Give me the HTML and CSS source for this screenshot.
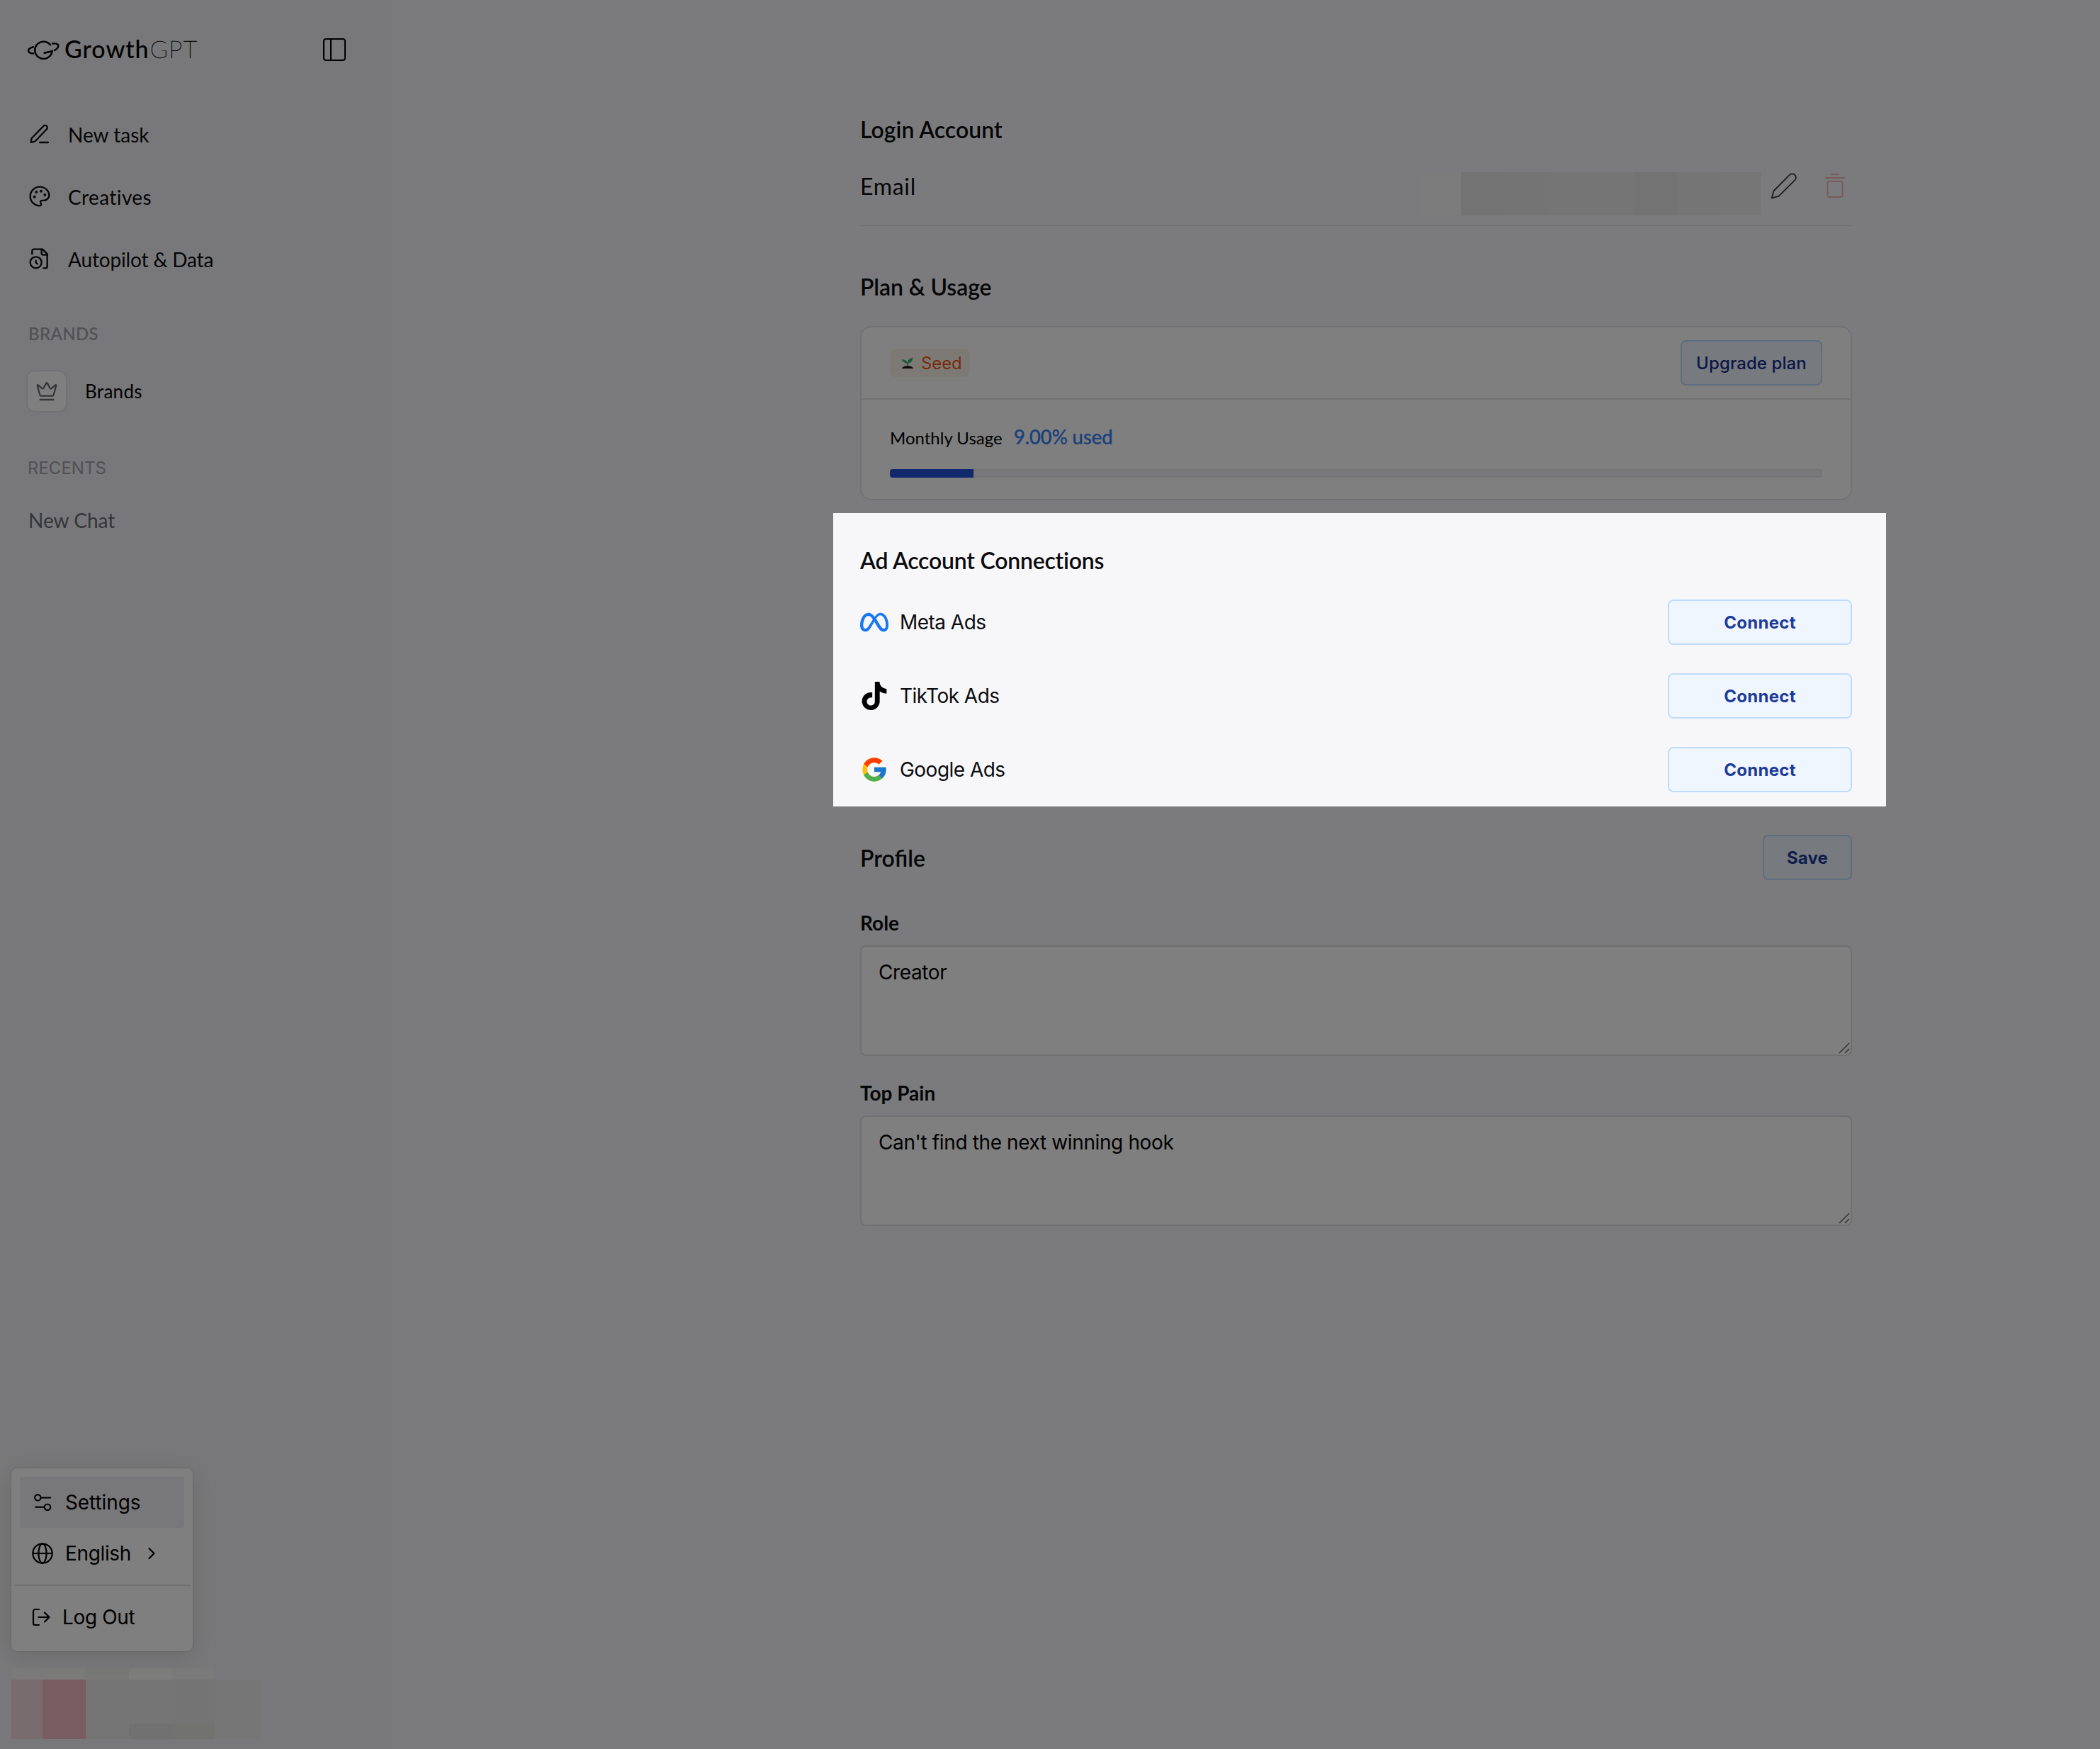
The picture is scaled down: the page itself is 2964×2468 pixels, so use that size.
FILE: index.html
```html
<!DOCTYPE html>
<html lang="en">
<head>
<meta charset="utf-8">
<title>GrowthGPT – Settings</title>
<link rel="stylesheet" href="styles.css">
</head>
<body>
<div class="app">
  <aside class="sidebar">
    <header class="brand-bar">
      <svg class="planet" viewBox="0 0 46 28" fill="none" stroke="currentColor" stroke-width="2.5" stroke-linecap="round">
        <path d="M33 7.2A12.2 12.2 0 1 0 35.6 16.2L24.6 18.8"/>
        <path d="M9 10.2C4 11.600 1.600 13.600 2.200 16c.5 2.300 3.200 3.400 7 3.500"/>
        <path d="M36.200 5.600c4.500-.6 7.600.2 8 2.400.4 2.300-2 5-5.200 7"/>
      </svg>
      <span class="logo-word">Growth</span><span class="logo-thin">GPT</span>
      <svg class="toggle" viewBox="0 0 34 34" fill="none" stroke="currentColor" stroke-width="2"><rect x="2" y="2" width="30" height="30" rx="3"/><path d="M12 2v30"/></svg>
    </header>
    <nav class="nav">
      <a class="nav-item"><svg class="ico" viewBox="0 0 32 32" fill="none" stroke="currentColor" stroke-width="2.300" stroke-linecap="round" stroke-linejoin="round"><path d="M3.700 27.800l.8-5.600L21.400 4.900a3.100 3.100 0 0 1 4.600 4.300L9.200 26.700z"/><path d="M16 28h12"/></svg><span>New task</span></a>
      <a class="nav-item"><svg class="ico" viewBox="0 0 24 24" fill="none" stroke="currentColor" stroke-width="1.800" stroke-linecap="round" stroke-linejoin="round"><circle cx="13.500" cy="6.500" r=".6" fill="currentColor"/><circle cx="17.500" cy="10.500" r=".6" fill="currentColor"/><circle cx="8.500" cy="7.500" r=".6" fill="currentColor"/><circle cx="6.500" cy="12.500" r=".6" fill="currentColor"/><path d="M12 2C6.500 2 2 6.500 2 12s4.500 10 10 10c.926 0 1.648-.746 1.648-1.688 0-.437-.18-.835-.437-1.125-.29-.289-.438-.652-.438-1.125a1.640 1.640 0 0 1 1.668-1.668h1.996c3.051 0 5.555-2.503 5.555-5.554C21.965 6.012 17.461 2 12 2z"/></svg><span class="ls-wide">Creatives</span></a>
      <a class="nav-item"><svg class="ico" viewBox="0 0 24 24" fill="none" stroke="currentColor" stroke-width="1.800" stroke-linecap="round" stroke-linejoin="round"><path d="M16 22h2a2 2 0 0 0 2-2V7l-5-5H6a2 2 0 0 0-2 2v3"/><path d="M14 2v4a2 2 0 0 0 2 2h4"/><circle cx="8" cy="16" r="6"/><path d="M9.500 17.500 8 16.250V14"/></svg><span class="ls-tight">Autopilot &amp; Data</span></a>
    </nav>
    <h3 class="group">BRANDS</h3>
    <a class="brand-row"><span class="tile"><svg class="ico" viewBox="0 0 24 24" fill="none" stroke="currentColor" stroke-width="1.700" stroke-linecap="round" stroke-linejoin="round"><path d="M11.562 3.266a.5.5 0 0 1 .876 0L15.390 8.870a1 1 0 0 0 1.516.294L21.183 5.500a.5.5 0 0 1 .798.519l-2.834 10.246a1 1 0 0 1-.956.734H5.810a1 1 0 0 1-.957-.734L2.020 6.020a.5.5 0 0 1 .798-.519l4.276 3.664a1 1 0 0 0 1.516-.294z"/><path d="M5 21h14"/></svg></span><span>Brands</span></a>
    <h3 class="group group-recents">RECENTS</h3>
    <a class="chat">New Chat</a>

    <div class="user">
      <div class="user-top"><i></i><i></i><i></i><i></i><i></i></div>
      <div class="user-main"><i></i><i></i><i></i><i></i><i></i><i></i></div>
    </div>
  </aside>

  <div class="menu">
    <a class="menu-item active"><svg class="ico" viewBox="0 0 32 32" fill="none" stroke="currentColor" stroke-width="2.200" stroke-linecap="round"><circle cx="9.300" cy="9.300" r="4.200"/><path d="M13.700 9.300h13.500M6.200 22.700h12.200"/><circle cx="23" cy="22.700" r="4.200"/></svg><span>Settings</span></a>
    <a class="menu-item"><svg class="ico" viewBox="0 0 32 32" fill="none" stroke="currentColor" stroke-width="2.200"><circle cx="16" cy="16" r="13.700"/><ellipse cx="16" cy="16" rx="5.600" ry="13.700"/><path d="M2.300 16h27.400"/></svg><span class="english">English</span><svg class="chev" viewBox="0 0 14 20" fill="none" stroke="currentColor" stroke-width="2.200" stroke-linecap="round" stroke-linejoin="round"><path d="M2.500 3l7 7-7 7"/></svg></a>
    <hr>
    <a class="menu-item logout"><svg class="out" viewBox="0 0 28 28" fill="none" stroke="currentColor" stroke-width="2.200" stroke-linecap="round" stroke-linejoin="round"><path d="M11 3H5.500a2.500 2.500 0 0 0-2.500 2.500v17A2.500 2.500 0 0 0 5.500 25H11M10.500 14h15M19 7.500l6.500 6.500-6.500 6.500"/></svg><span>Log Out</span></a>
  </div>

  <main class="main">
    <h2>Login Account</h2>
    <div class="email-row">
      <span class="email-label">Email</span>
      <div class="email-mask"><i></i><i></i><i></i><i></i><i></i><i></i><i></i><i></i></div>
      <svg class="pencil" viewBox="0 0 40 40" fill="none" stroke="currentColor" stroke-width="1.900" stroke-linejoin="round"><path d="M2.800 37.500l2.600-10L27.800 4.800a5.200 5.200 0 0 1 7.500 7.400L12.500 34.800z"/></svg>
      <svg class="trash" viewBox="0 0 32 40" fill="none" stroke="currentColor" stroke-width="2"><path d="M10 4h12M2 9h28"/><rect x="5.500" y="14" width="21" height="22" rx="2"/></svg>
    </div>

    <h2 class="h-plan">Plan &amp; Usage</h2>
    <section class="card">
      <div class="card-top">
        <span class="badge"><svg viewBox="0 0 18 18"><path d="M9 9.500v5" stroke="#2fb574" stroke-width="1.600"/><path d="M9 10C7.500 10 2 8 .6 4.200 4.400 4 8.500 6 9 10zM9 10c-.8-4 2.500-7.500 7.400-8.500C16.600 5.500 13.500 9.500 9 10z" fill="#2fb574"/><path d="M.8 17c1.400-3 4.600-3.600 8.200-3.600s6.800.6 8.200 3.600z" fill="#151515"/></svg>Seed</span>
        <button class="btn btn-upgrade">Upgrade plan</button>
      </div>
      <div class="card-body">
        <div class="usage"><span>Monthly Usage</span><strong>9.00% used</strong></div>
        <div class="bar"><div class="fill" style="width:9%"></div></div>
      </div>
    </section>

    <section class="spotlight">
      <h2>Ad Account Connections</h2>
      <div class="conn"><svg class="logo" viewBox="0 0 24 24" fill="#1877f2"><path d="M6.915 4.030c-1.968 0-3.683 1.280-4.871 3.113C.704 9.208 0 11.883 0 14.449c0 .706.07 1.369.21 1.973a6.624 6.624 0 0 0 .265.86 5.297 5.297 0 0 0 .371.761c.696 1.159 1.818 1.927 3.593 1.927 1.497 0 2.633-.671 3.965-2.444.76-1.012 1.144-1.626 2.663-4.320l.756-1.339.186-.325c.061.1.121.196.183.3l2.152 3.595c.724 1.210 1.665 2.556 2.470 3.314 1.046.987 1.992 1.220 3.060 1.220 1.075 0 1.876-.355 2.455-.843a3.743 3.743 0 0 0 .81-.973c.542-.939.861-2.127.861-3.745 0-2.720-.681-5.357-2.084-7.450-1.282-1.912-2.957-2.930-4.716-2.930-1.047 0-2.088.467-3.053 1.308-.652.57-1.257 1.290-1.820 2.050-.69-.875-1.335-1.547-1.958-2.056-1.182-.966-2.315-1.303-3.454-1.303zm10.160 2.053c1.147 0 2.188.758 2.992 1.999 1.132 1.748 1.647 4.195 1.647 6.400 0 1.548-.368 2.900-1.839 2.900-.58 0-1.027-.23-1.664-1.004-.496-.601-1.343-1.878-2.832-4.358l-.617-1.028a44.908 44.908 0 0 0-1.255-1.980c.07-.109.141-.224.211-.327 1.120-1.667 2.118-2.602 3.358-2.602zm-10.201.553c1.265 0 2.058.791 2.675 1.446.307.327.737.871 1.234 1.579l-1.020 1.566c-.757 1.163-1.882 3.017-2.837 4.338-1.191 1.649-1.810 1.817-2.486 1.817-.524 0-1.038-.237-1.383-.794-.263-.426-.464-1.130-.464-2.046 0-2.221.63-4.535 1.660-6.088.454-.687.964-1.226 1.533-1.533a2.264 2.264 0 0 1 1.088-.285z"/></svg><span>Meta Ads</span><button class="btn btn-connect">Connect</button></div>
      <div class="conn"><svg class="logo" viewBox="0 0 24 24" fill="#000"><path d="M12.525.02c1.310-.02 2.610-.01 3.910-.02.08 1.530.63 3.090 1.750 4.170 1.120 1.110 2.700 1.620 4.240 1.790v4.030c-1.440-.05-2.890-.35-4.200-.97-.57-.26-1.100-.59-1.620-.93-.01 2.920.01 5.840-.02 8.750-.08 1.400-.54 2.790-1.350 3.940-1.310 1.920-3.580 3.170-5.910 3.210-1.430.08-2.860-.31-4.080-1.030-2.020-1.190-3.440-3.370-3.650-5.710-.02-.5-.03-1-.01-1.490.18-1.900 1.120-3.720 2.580-4.960 1.660-1.440 3.980-2.130 6.150-1.720.02 1.480-.04 2.960-.04 4.440-.99-.32-2.150-.23-3.020.37-.63.41-1.110 1.040-1.360 1.750-.21.51-.15 1.070-.14 1.610.24 1.640 1.820 3.020 3.500 2.870 1.120-.01 2.190-.66 2.770-1.610.19-.33.4-.67.41-1.060.1-1.790.06-3.570.07-5.360.01-4.030-.01-8.050.02-12.070z"/></svg><span>TikTok Ads</span><button class="btn btn-connect">Connect</button></div>
      <div class="conn"><svg class="logo" viewBox="0 0 48 48"><path fill="#FFC107" d="M43.611 20.083H42V20H24v8h11.303c-1.649 4.657-6.080 8-11.303 8-6.627 0-12-5.373-12-12s5.373-12 12-12c3.059 0 5.842 1.154 7.961 3.039l5.657-5.657C34.046 6.053 29.268 4 24 4 12.955 4 4 12.955 4 24s8.955 20 20 20 20-8.955 20-20c0-1.341-.138-2.650-.389-3.917z"/><path fill="#FF3D00" d="M6.306 14.691l6.571 4.819C14.655 15.108 18.961 12 24 12c3.059 0 5.842 1.154 7.961 3.039l5.657-5.657C34.046 6.053 29.268 4 24 4 16.318 4 9.656 8.337 6.306 14.691z"/><path fill="#4CAF50" d="M24 44c5.166 0 9.860-1.977 13.409-5.192l-6.190-5.238C29.211 35.091 26.715 36 24 36c-5.202 0-9.619-3.317-11.283-7.946l-6.522 5.025C9.505 39.556 16.227 44 24 44z"/><path fill="#1976D2" d="M43.611 20.083H42V20H24v8h11.303c-.792 2.237-2.231 4.166-4.087 5.571l6.193 5.238C36.971 39.205 44 34 44 24c0-1.341-.138-2.650-.389-3.917z"/></svg><span>Google Ads</span><button class="btn btn-connect">Connect</button></div>
    </section>

    <div class="profile-head"><h2>Profile</h2><button class="btn btn-save">Save</button></div>
    <label>Role</label>
    <div class="field"><textarea>Creator</textarea><svg class="grip" viewBox="0 0 16 16" stroke="currentColor" stroke-width="1.500" fill="none"><path d="M1 15L15 1M9 15l6-6"/></svg></div>
    <label>Top Pain</label>
    <div class="field"><textarea>Can't find the next winning hook</textarea><svg class="grip" viewBox="0 0 16 16" stroke="currentColor" stroke-width="1.500" fill="none"><path d="M1 15L15 1M9 15l6-6"/></svg></div>
  </main>
</div>
</body>
</html>
```
FILE: styles.css
```css
* { box-sizing: border-box; }
body {
  margin: 0;
  overflow: hidden;
  background: #f7f7fa;
  color: #0b0c0e;
  font-family: Lato, sans-serif;
  font-size: 28px;
}
svg { display: block; flex: none; }
h2, h3 { margin: 0; }
.app { display: flex; height: 2468px; }

/* Sidebar */
.sidebar {
  width: 552px;
  padding-top: 40px;
  background: #f1f1f4;
  display: flex;
  flex-direction: column;
}
.brand-bar { display: flex; align-items: center; height: 60px; padding: 0 63px 0 38px; color: #000; font-size: 34px; }
.planet { width: 46px; height: 28px; margin-right: 7px; }
.logo-word, .logo-thin { padding-bottom: 3px; }
.logo-word { font-weight: 500; letter-spacing: 1px; }
.logo-thin { margin-left: 1px; font-weight: 100; letter-spacing: 1.5px; -webkit-text-stroke: .5px #000; }
.toggle { width: 34px; height: 34px; margin-left: auto; }
.nav { margin-top: 45px; }
.nav-item { display: flex; align-items: center; height: 88px; padding-left: 40px; gap: 24px; }
.nav-item span { padding-top: 2px; }
.ico { width: 32px; height: 32px; }
.ls-wide { letter-spacing: .4px; }
.ls-tight { letter-spacing: -.15px; }
.group { margin: 42px 0 0 40px; line-height: 40px; font-size: 24px; font-weight: 600; letter-spacing: .3px; color: #a5a5ab; }
.brand-row { display: flex; align-items: center; gap: 25px; height: 60px; margin: 31px 0 0 37px; font-size: 26px; letter-spacing: .3px; color: #000; }
.tile { display: flex; align-items: center; justify-content: center; width: 58px; height: 60px; border: 2px solid #e4e4e8; border-radius: 12px; background: #fff; color: #6b6b74; }
.group-recents { margin-top: 59px; margin-left: 39px; font-family: Inter, sans-serif; font-weight: 400; letter-spacing: 0; color: #a1a1a9; }
.chat { margin: 33px 0 0 40px; line-height: 40px; color: #6a6a71; }
.user { margin: auto 0 14px 16px; width: 354px; }
.user-top, .user-main { display: flex; height: 16px; }
.user-main { height: 84px; }
.user i { height: 100%; flex: none; }
.user-top i:nth-child(1) { width: 44px; background: #f5f5f5; }
.user-top i:nth-child(2) { width: 61px; background: #f7f7f5; }
.user-top i:nth-child(3) { width: 61px; background: #f1f1f0; }
.user-top i:nth-child(4) { width: 61px; background: #fbfbfa; }
.user-top i:nth-child(5) { width: 60px; background: #f5f5f6; }
.user-main i:nth-child(1) { width: 44px; background: #f2d8dc; }
.user-main i:nth-child(2) { width: 61px; background: #f3bac5; }
.user-main i:nth-child(3) { width: 61px; background: #eaebec; }
.user-main i:nth-child(4) { width: 61px; background: linear-gradient(#ebebed 74%, #e3e3e5 74%); }
.user-main i:nth-child(5) { width: 60px; background: linear-gradient(#e9e9eb 74%, #e4e4e2 74%); }
.user-main i:nth-child(6) { width: 66px; background: #ededef; }

/* Account menu */
.menu {
  position: absolute;
  left: 16px;
  top: 2072px;
  z-index: 1;
  width: 256px;
  height: 258px;
  padding: 12px 0;
  border-radius: 8px;
  background: #fff;
  box-shadow: 0 0 2px rgba(0, 0, 0, .25), 0 6px 36px rgba(0, 0, 0, .12);
  font-family: Inter, sans-serif;
  color: #000;
}
.menu-item { display: flex; align-items: center; height: 72px; margin: 0 12px; padding-left: 16px; gap: 16px; letter-spacing: -.1px; border-radius: 4px; }
.menu-item.active { background: #f1f1f4; }
.english { letter-spacing: -.35px; }
.chev { width: 14px; height: 20px; margin-left: 7px; }
.menu hr { margin: 8px 4px; border: 0; height: 2px; background: #dededf; }
.out { width: 28px; height: 28px; }
.logout { gap: 16px; letter-spacing: -.35px; }

/* Settings page */
.main { width: 2062px; padding: 163px 0 0 662px; }
h2 { font-size: 32px; font-weight: 600; line-height: 40px; }
.email-row { display: flex; align-items: center; height: 112px; margin-top: 4px; border-bottom: 2px solid #e1e1e4; }
.email-label { font-size: 32px; letter-spacing: .7px; }
.email-mask { display: flex; height: 61px; margin: 22px 12px 0 auto; }
.email-mask i { width: 61px; background: #eaeaeb; }
.email-mask i:nth-child(1) { width: 58px; background: #f8f8fa; }
.email-mask i:nth-child(2) { background: #e6e6e7; }
.email-mask i:nth-child(3) { background: #e8e8e9; }
.email-mask i:nth-child(6) { background: #e6e6e8; }
.email-mask i:nth-child(8) { width: 58px; background: #ececed; }
.pencil { width: 40px; height: 40px; color: #3f3f46; }
.trash { width: 32px; height: 40px; margin: 0 8px 0 36px; color: #f5b4b6; }
.h-plan { margin-top: 66px; letter-spacing: -.1px; }
.card { width: 1400px; height: 246px; margin-top: 35px; border: 2px solid #e4e4e6; border-radius: 16px; background: #fff; }
.card-top { display: flex; align-items: center; justify-content: space-between; height: 102px; padding: 0 40px; border-bottom: 2px solid #e4e4e6; }
.badge { display: flex; align-items: center; gap: 10px; height: 40px; width: 113px; padding-left: 16px; border-radius: 8px; background: #fbf4ea; color: #f2561a; font: 400 24px Inter, sans-serif; letter-spacing: -.1px; }
.badge svg { width: 18px; height: 18px; }
.btn { height: 64px; padding: 1px 0 0; border: 2px solid #bfdbfe; border-radius: 8px; background: #eff6ff; color: #1e3a99; font: 700 24px Inter, sans-serif; letter-spacing: .3px; text-align: center; }
.btn-upgrade { width: 200px; font-weight: 500; letter-spacing: .1px; color: #1a2f8f; }
.btn-connect { width: 260px; margin-left: auto; }
.btn-save { width: 126px; letter-spacing: .1px; }
.card-body { padding: 32px 40px 0; color: #000; }
.usage { display: flex; align-items: baseline; gap: 16px; height: 40px; line-height: 40px; font-size: 24px; }
.usage strong { font-size: 28px; font-weight: 600; letter-spacing: -.4px; color: #3b82f6; }
.bar { height: 12px; margin-top: 26px; border-radius: 4px; overflow: hidden; background: #f1f1f4; box-shadow: inset 0 0 0 2px #e8e8eb; }
.fill { height: 100%; background: #2050d8; }

/* Highlighted section: everything around it is dimmed */
.spotlight {
  position: relative;
  z-index: 2;
  width: 1486px;
  height: 414px;
  margin: 18px 0 0 -38px;
  padding: 47px 48px 0 38px;
  background: #f7f7fa;
  box-shadow: 0 0 0 3000px rgba(0, 0, 0, .5);
}
.spotlight h2 { margin-bottom: 35px; letter-spacing: -.22px; }
.conn { display: flex; align-items: center; height: 64px; margin-bottom: 40px; font: 28px Inter, sans-serif; letter-spacing: -.53px; }
.logo { width: 40px; height: 40px; margin-right: 16px; }

.profile-head { display: flex; align-items: center; justify-content: space-between; height: 64px; margin-top: 40px; }
.profile-head h2 { padding-top: 2px; }
label { display: block; margin: 42px 0 14px; line-height: 36px; font-weight: 700; }
.field + label { margin-top: 34px; }
.field { position: relative; height: 156px; }
textarea {
  display: block;
  width: 100%;
  height: 100%;
  padding: 18px 24px;
  border: 2px solid #e1e1e3;
  border-radius: 8px;
  background: #fff;
  color: #000;
  font: 28px/36px Inter, sans-serif;
  letter-spacing: -.38px;
  resize: none;
}
.grip { position: absolute; right: 3px; bottom: 3px; width: 16px; height: 16px; color: #666; }
```
